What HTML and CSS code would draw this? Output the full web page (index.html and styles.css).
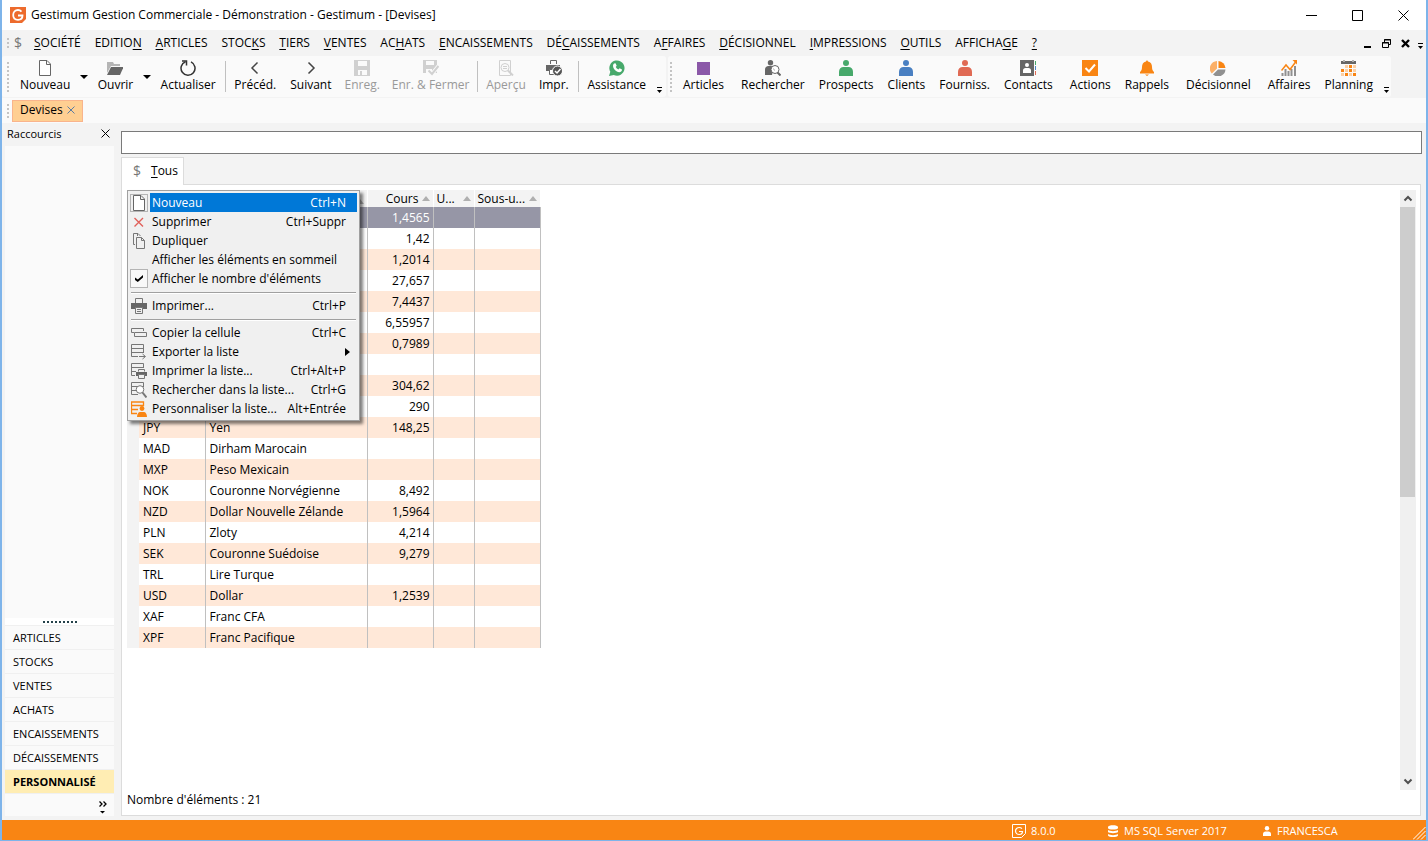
FILE: index.html
```html
<!DOCTYPE html>
<html lang="fr">
<head>
    <meta charset="UTF-8">
    <meta name="viewport" content="width=device-width, initial-scale=1.0">
    <title>Gestimum Gestion Commerciale</title>
    <link rel="stylesheet" href="styles.css">
</head>
<body>
<div class="window">
    <!-- Barre de titre -->
    <header class="titlebar">
        <svg class="logo" viewBox="0 0 16 16"><path d="M0 0h16v12l-4 4H0z" fill="#ed6b2d"/><path d="M11.5 4.6C10.6 3.6 9.500 3 8 3 5.200 3 3.200 5.100 3.200 8s2 4.800 4.800 4.800c2.600 0 4.500-1.700 4.500-4.300H8" fill="none" stroke="#fff" stroke-width="1.8"/></svg>
        <h1 class="title">Gestimum Gestion Commerciale - Démonstration - Gestimum - [Devises]</h1>
        <div class="win-buttons">
            <button type="button" aria-label="Réduire"><svg width="11" height="11"><path d="M0 5.500h11" stroke="#000"/></svg></button>
            <button type="button" aria-label="Agrandir"><svg width="11" height="11"><path d="M.5.5h10v10H.5z" fill="none" stroke="#000"/></svg></button>
            <button type="button" aria-label="Fermer"><svg width="11" height="11"><path d="M.5.5l10 10M10.500.5l-10 10" stroke="#000"/></svg></button>
        </div>
    </header>

    <!-- Menu principal -->
    <nav class="menubar">
        <span class="grip grip-menu"></span>
        <span class="dollar">$</span>
        <div class="menus">
            <button type="button"><u>S</u>OCIÉTÉ</button>
            <button type="button">EDITIO<u>N</u></button>
            <button type="button"><u>A</u>RTICLES</button>
            <button type="button">STOC<u>K</u>S</button>
            <button type="button"><u>T</u>IERS</button>
            <button type="button"><u>V</u>ENTES</button>
            <button type="button">AC<u>H</u>ATS</button>
            <button type="button"><u>E</u>NCAISSEMENTS</button>
            <button type="button">DÉ<u>C</u>AISSEMENTS</button>
            <button type="button">A<u>F</u>FAIRES</button>
            <button type="button"><u>D</u>ÉCISIONNEL</button>
            <button type="button"><u>I</u>MPRESSIONS</button>
            <button type="button"><u>O</u>UTILS</button>
            <button type="button">AFFICHA<u>G</u>E</button>
            <button type="button"><u>?</u></button>
        </div>
        <div class="mdi-buttons">
            <button type="button" aria-label="Réduire la fiche"><svg width="9" height="9"><path d="M1 8h7" stroke="#000" stroke-width="2"/></svg></button>
            <button type="button" aria-label="Restaurer la fiche"><svg width="9" height="9"><path d="M2.500 3V.5h6v5H6M2 1h7M.5 3.500h6v5h-6zM0 4h7" fill="none" stroke="#000"/></svg></button>
            <button type="button" aria-label="Fermer la fiche"><svg width="9" height="9"><path d="M1 1l7 7M8 1L1 8" stroke="#000" stroke-width="2.400"/></svg></button>
        </div>
        <button type="button" class="overflow" aria-label="Plus"><svg width="5" height="6"><path d="M0 .5h5" stroke="#000"/><path d="M0 3h5L2.500 6z"/></svg></button>
    </nav>

    <!-- Barres d'outils -->
    <div class="toolbars">
        <div class="toolbar toolbar-main">
            <span class="grip"></span>
            <button type="button" class="tool"><svg class="ico" viewBox="0 0 16 16"><path d="M2.500.5h7.500l3.500 3.500v11.500h-11zM9.500.5V4.500h4" fill="#fff" stroke="#666"/></svg>Nouveau</button>
            <button type="button" class="drop" aria-label="Options de Nouveau"></button>
            <button type="button" class="tool"><svg class="ico" viewBox="0 0 16 16"><path d="M0 13V2h6l1 2h6v2H4z" fill="#b5b5b5"/><path d="M0 15L4 7h12.500L13 15z" fill="#666"/></svg>Ouvrir</button>
            <button type="button" class="drop" aria-label="Options d'Ouvrir"></button>
            <button type="button" class="tool"><svg class="ico" viewBox="0 0 16 16"><path d="M5.500 1.700A7 7 0 1 0 11 1.900" fill="none" stroke="#333" stroke-width="1.500"/><path d="M2 1h4.500v4.500" fill="none" stroke="#333" stroke-width="1.500"/></svg>Actualiser</button>
            <span class="sep"></span>
            <button type="button" class="tool"><svg class="ico" viewBox="0 0 16 16"><path d="M10.500 2.500L5 8l5.500 5.500" fill="none" stroke="#444" stroke-width="1.500"/></svg>Précéd.</button>
            <button type="button" class="tool"><svg class="ico" viewBox="0 0 16 16"><path d="M5.500 2.500L11 8l-5.500 5.500" fill="none" stroke="#444" stroke-width="1.500"/></svg>Suivant</button>
            <button type="button" class="tool" disabled><svg class="ico" viewBox="0 0 16 16"><path d="M0 0h16v16H0z" fill="#d0d0d0"/><path d="M4 1h9v5H4zM4 10h9v5H4z" fill="#fafafa"/><path d="M6 11h2v4H6z" fill="#d0d0d0"/></svg>Enreg.</button>
            <button type="button" class="tool" disabled><svg class="ico" viewBox="0 0 16 16"><path d="M0 0h14v13H0z" fill="#d0d0d0"/><path d="M3 1h8v4H3zM3 9h6v4H3z" fill="#fafafa"/><path d="M5.500 10.500l3.500 3.500 6.500-8" fill="none" stroke="#fafafa" stroke-width="4"/><path d="M5.500 10.500l3.500 3.500 6.500-8" fill="none" stroke="#d0d0d0" stroke-width="2"/></svg>Enr. &amp; Fermer</button>
            <span class="sep"></span>
            <button type="button" class="tool" disabled><svg class="ico" viewBox="0 0 16 16"><path d="M1.500.5h11v15h-11z" fill="none" stroke="#d0d0d0"/><circle cx="7" cy="7.500" r="4" fill="#fafafa" stroke="#d0d0d0"/><path d="M5 6.500h4M5 8.500h4" stroke="#d0d0d0"/><path d="M10 10.500l5 5" stroke="#d0d0d0" stroke-width="2"/></svg>Aperçu</button>
            <button type="button" class="tool"><svg class="ico" viewBox="0 0 16 16"><path d="M4.500 4V.5h6V4" fill="none" stroke="#666"/><path d="M0 5h14v6H0z" fill="#666"/><path d="M3.500 9.500h5v5h-5z" fill="#fff" stroke="#666"/><circle cx="11.500" cy="11" r="5" fill="#555" stroke="#fafafa"/><path d="M9 11l2 2 3.500-4" fill="none" stroke="#fff" stroke-width="1.500"/></svg>Impr.</button>
            <span class="sep"></span>
            <button type="button" class="tool"><svg class="ico" viewBox="0 0 16 16"><path d="M0 16l1.300-4.200A7.600 7.600 0 1 1 4.800 15z" fill="#47a96b"/><path d="M5 3.500l1.500-.2 1.200 2.500-1 1.200c.6 1.200 1.500 2 2.700 2.600l1.200-1.300 2.400 1.200c0 1.700-1.300 2.700-2.700 2.700C7 12 4 8.500 4 5.700c0-1 .4-1.700 1-2.200z" fill="#fff"/></svg>Assistance</button>
            <button type="button" class="overflow" aria-label="Plus"><svg width="5" height="6"><path d="M0 .5h5" stroke="#000"/><path d="M0 3h5L2.500 6z"/></svg></button>
        </div>
        <div class="toolbar toolbar-links">
            <span class="grip"></span>
            <button type="button" class="tool"><svg class="ico" viewBox="0 0 16 16"><path d="M1 2h13v13H1z" fill="#8b58a8"/></svg>Articles</button>
            <span class="sep"></span>
            <button type="button" class="tool"><svg class="ico" viewBox="0 0 16 16"><circle cx="5.500" cy="2.700" r="2.700" fill="#666"/><path d="M0 15V9.500C0 7.500 1.500 6 3.500 6h5L7 15z" fill="#666"/><circle cx="10" cy="9.500" r="4" fill="#fff" stroke="#666"/><path d="M12.500 12.500l3 3" stroke="#666" stroke-width="2"/><path d="M8.500 8.500l1 2" stroke="#aaa"/></svg>Rechercher</button>
            <button type="button" class="tool"><svg class="ico" viewBox="0 0 16 16"><circle cx="8" cy="3" r="3" fill="#47a96b"/><path d="M1 16v-4.500C1 9 3 7 5.500 7h5C13 7 15 9 15 11.500V16z" fill="#47a96b"/></svg>Prospects</button>
            <button type="button" class="tool"><svg class="ico" viewBox="0 0 16 16"><circle cx="8" cy="3" r="3" fill="#4a80c2"/><path d="M1 16v-4.500C1 9 3 7 5.500 7h5C13 7 15 9 15 11.500V16z" fill="#4a80c2"/></svg>Clients</button>
            <button type="button" class="tool"><svg class="ico" viewBox="0 0 16 16"><circle cx="8" cy="3" r="3" fill="#e06a54"/><path d="M1 16v-4.500C1 9 3 7 5.500 7h5C13 7 15 9 15 11.500V16z" fill="#e06a54"/></svg>Fourniss.</button>
            <button type="button" class="tool"><svg class="ico" viewBox="0 0 16 16"><path d="M0 0h14v16H0z" fill="#666"/><circle cx="7" cy="5" r="2" fill="#fff"/><path d="M3 13v-2.500C3 9 4 8 5.500 8h3c1.500 0 2.500 1 2.500 2.500V13z" fill="#fff"/><path d="M15.500 1v4" stroke="#47a96b"/><path d="M15.500 6v4" stroke="#4a80c2"/><path d="M15.500 11v4" stroke="#e06a54"/></svg>Contacts</button>
            <span class="sep"></span>
            <button type="button" class="tool"><svg class="ico" viewBox="0 0 16 16"><path d="M0 0h16v16H0z" fill="#f98513"/><path d="M3.500 8l3.500 3.500L13 4.500" fill="none" stroke="#fff" stroke-width="2"/></svg>Actions</button>
            <button type="button" class="tool"><svg class="ico" viewBox="0 0 16 16"><path d="M7 1.500C7 0 9 0 9 1.500c3 .5 4 3 4 5.500 0 3 1 4 2 5v1.500H1V12c1-1 2-2 2-5 0-2.500 1-5 4-5.500zM6 14.500h4L8 16z" fill="#f98513"/></svg>Rappels</button>
            <span class="sep"></span>
            <button type="button" class="tool"><svg class="ico" viewBox="0 0 16 16"><path d="M7 1v7.500L1.800 13.500A7.500 7.500 0 0 1 7 1z" fill="#fbb068"/><path d="M8.500 1A7.500 7.500 0 0 1 15.500 8h-7z" fill="#f98513"/><path d="M8 9.500h7.500A7.500 7.500 0 0 1 3 14.500z" fill="#909090"/></svg>Décisionnel</button>
            <span class="sep"></span>
            <button type="button" class="tool"><svg class="ico" viewBox="0 0 16 16"><path d="M1.500 16v-3M4.500 16V9M7.500 16v-5M10.500 16V9M14 16V6" stroke="#909090" stroke-width="2"/><path d="M.5 10.500L5 5l4 4.500L15 1.500" fill="none" stroke="#f98513" stroke-width="1.500"/><path d="M11.500 0H16v4.500z" fill="#f98513"/></svg>Affaires</button>
            <button type="button" class="tool"><svg class="ico" viewBox="0 0 16 16"><path d="M0 1h2v1h2V1h7v1h2V1h2v3H0z" fill="#666"/><path d="M3 0v2M12 0v2" stroke="#666"/><path d="M8 5h3v3H8zM0 9h3v3H0zM8 9h3v3H8zM4 13h3v3H4zM12 13h3v3h-3z" fill="#f98513"/><path d="M4 5h3v3H4zM12 5h3v3h-3zM4 9h3v3H4zM12 9h3v3h-3zM0 13h3v3H0zM8 13h3v3H8z" fill="#fcd0a4"/></svg>Planning</button>
            <button type="button" class="overflow" aria-label="Plus"><svg width="5" height="6"><path d="M0 .5h5" stroke="#000"/><path d="M0 3h5L2.500 6z"/></svg></button>
        </div>
    </div>

    <!-- Onglets des fiches ouvertes -->
    <div class="doc-tabs">
        <span class="grip grip-tabs"></span>
        <button type="button" class="doc-tab">Devises<svg width="8" height="8"><path d="M.5.5l7 7M7.500.5l-7 7" stroke="#5b7da3"/></svg></button>
    </div>

    <main class="main">
        <aside class="sidebar">
            <div class="side-head">
                <span>Raccourcis</span>
                <button type="button" aria-label="Fermer les raccourcis"><svg width="9" height="9"><path d="M.5.5l8 8M8.500.5l-8 8" stroke="#000"/></svg></button>
            </div>
            <div class="side-body"></div>
            <div class="splitter"><span class="dots"></span></div>
            <button type="button" class="side-item">ARTICLES</button>
            <button type="button" class="side-item">STOCKS</button>
            <button type="button" class="side-item">VENTES</button>
            <button type="button" class="side-item">ACHATS</button>
            <button type="button" class="side-item">ENCAISSEMENTS</button>
            <button type="button" class="side-item">DÉCAISSEMENTS</button>
            <button type="button" class="side-item active">PERSONNALISÉ</button>
            <div class="side-foot">
                <button type="button" aria-label="Autres groupes"><svg width="8" height="13"><path d="M.5.5L3 3 .5 5.500M4.500.5L7 3 4.500 5.500" fill="none" stroke="#000" stroke-width="1.300"/><path d="M1 10h5L3.500 12.500z"/></svg></button>
            </div>
        </aside>

        <section class="content">
            <input type="text" class="filter" aria-label="Filtre">
            <div class="view-tabs">
                <button type="button" class="view-tab"><span class="dollar">$</span><span><u>T</u>ous</span></button>
            </div>
            <div class="panel">
                <div class="list">
                    <table class="grid">
                        <colgroup>
                            <col class="c-mark"><col class="c-code"><col class="c-name"><col class="c-rate"><col class="c-unit"><col class="c-sub">
                        </colgroup>
                        <thead>
                            <tr><th></th><th></th><th><i class="sort"></i></th><th class="num">Cours<i class="sort"></i></th><th>U...<i class="sort"></i></th><th>Sous-u...<i class="sort"></i></th></tr>
                        </thead>
                        <tbody>
                            <tr class="selected"><td></td><td></td><td></td><td>1,4565</td><td></td><td></td></tr>
                            <tr><td></td><td></td><td></td><td>1,42</td><td></td><td></td></tr>
                            <tr><td></td><td></td><td></td><td>1,2014</td><td></td><td></td></tr>
                            <tr><td></td><td></td><td></td><td>27,657</td><td></td><td></td></tr>
                            <tr><td></td><td></td><td></td><td>7,4437</td><td></td><td></td></tr>
                            <tr><td></td><td></td><td></td><td>6,55957</td><td></td><td></td></tr>
                            <tr><td></td><td></td><td></td><td>0,7989</td><td></td><td></td></tr>
                            <tr><td></td><td></td><td></td><td></td><td></td><td></td></tr>
                            <tr><td></td><td></td><td></td><td>304,62</td><td></td><td></td></tr>
                            <tr><td></td><td></td><td></td><td>290</td><td></td><td></td></tr>
                            <tr><td></td><td>JPY</td><td>Yen</td><td>148,25</td><td></td><td></td></tr>
                            <tr><td></td><td>MAD</td><td>Dirham Marocain</td><td></td><td></td><td></td></tr>
                            <tr><td></td><td>MXP</td><td>Peso Mexicain</td><td></td><td></td><td></td></tr>
                            <tr><td></td><td>NOK</td><td>Couronne Norvégienne</td><td>8,492</td><td></td><td></td></tr>
                            <tr><td></td><td>NZD</td><td>Dollar Nouvelle Zélande</td><td>1,5964</td><td></td><td></td></tr>
                            <tr><td></td><td>PLN</td><td>Zloty</td><td>4,214</td><td></td><td></td></tr>
                            <tr><td></td><td>SEK</td><td>Couronne Suédoise</td><td>9,279</td><td></td><td></td></tr>
                            <tr><td></td><td>TRL</td><td>Lire Turque</td><td></td><td></td><td></td></tr>
                            <tr><td></td><td>USD</td><td>Dollar</td><td>1,2539</td><td></td><td></td></tr>
                            <tr><td></td><td>XAF</td><td>Franc CFA</td><td></td><td></td><td></td></tr>
                            <tr><td></td><td>XPF</td><td>Franc Pacifique</td><td></td><td></td><td></td></tr>
                        </tbody>
                    </table>

                    <div class="scrollbar">
                        <svg width="16" height="17"><path d="M4.500 10.500L8 7l3.500 3.500" fill="none" stroke="#505050" stroke-width="2"/></svg>
                        <div class="thumb"></div>
                        <svg width="16" height="17"><path d="M4.500 6.500L8 10l3.500-3.500" fill="none" stroke="#505050" stroke-width="2"/></svg>
                    </div>

                    <!-- Menu contextuel de la liste -->
                    <div class="context-menu">
                        <button type="button" class="entry current"><svg class="ico" viewBox="0 0 16 16"><path d="M2.500.5h7.500l3.500 3.500v11.500h-11zM9.500.5V4.500h4" fill="#fff" stroke="#666"/></svg><span class="label">Nouveau<kbd>Ctrl+N</kbd></span></button>
                        <button type="button" class="entry"><svg class="ico" viewBox="0 0 16 16"><path d="M3.500 4l8.500 8.500M12 4l-8.500 8.500" stroke="#e0605a" stroke-width="1.400"/></svg><span class="label">Supprimer<kbd>Ctrl+Suppr</kbd></span></button>
                        <button type="button" class="entry"><svg class="ico" viewBox="0 0 16 16"><path d="M4 11.500H2.500v-11H7L9.500 3M6.500.5V3" fill="none" stroke="#777"/><path d="M5.500 4.500h5l3 3v8h-8zM10.500 4.500v3h3" fill="#f0f0f0" stroke="#777"/></svg><span class="label">Dupliquer</span></button>
                        <button type="button" class="entry"><span class="ico"></span><span class="label">Afficher les éléments en sommeil</span></button>
                        <label class="entry"><input type="checkbox" class="tick" checked><span class="label">Afficher le nombre d'éléments</span></label>
                        <hr>
                        <button type="button" class="entry"><svg class="ico" viewBox="0 0 16 16"><path d="M4.500 5V.5h7V5" fill="none" stroke="#777"/><path d="M0 5h16v6H0z" fill="#666"/><path d="M4.500 9.500h7v6h-7z" fill="#f0f0f0" stroke="#777"/><path d="M6 11.500h4M6 13.500h4" stroke="#777"/></svg><span class="label">Imprimer...<kbd>Ctrl+P</kbd></span></button>
                        <hr>
                        <button type="button" class="entry"><svg class="ico" viewBox="0 0 16 16"><path d="M3 7.500H.5v-4h12V6M3.500 7.500h12v4h-12z" fill="none" stroke="#777"/></svg><span class="label">Copier la cellule<kbd>Ctrl+C</kbd></span></button>
                        <button type="button" class="entry"><svg class="ico" viewBox="0 0 16 16"><path d="M12.500 9V.5H.5v12H7M.5 4.500h12M.5 8.500h12" fill="none" stroke="#777"/><path d="M8 12.500h6M11.500 10l3 2.500-3 2.500" fill="none" stroke="#777"/></svg><span class="label">Exporter la liste<i class="submenu"></i></span></button>
                        <button type="button" class="entry"><svg class="ico" viewBox="0 0 16 16"><path d="M12.500 5V.5H.5v12H4M.5 4.500h12M.5 8.500H5" fill="none" stroke="#777"/><path d="M7.500 8.500v-2h6v2" fill="none" stroke="#777"/><path d="M5 9h11v4H5z" fill="#666"/><path d="M7.500 11.500h6v4h-6z" fill="#f0f0f0" stroke="#777"/></svg><span class="label">Imprimer la liste...<kbd>Ctrl+Alt+P</kbd></span></button>
                        <button type="button" class="entry"><svg class="ico" viewBox="0 0 16 16"><path d="M12.500 5V.5H.5v12H7M.5 4.500h12M.5 8.500H5" fill="none" stroke="#777"/><circle cx="9" cy="7.500" r="3.800" fill="#fff" stroke="#777"/><path d="M11.500 10.500l4 5" stroke="#777" stroke-width="2"/></svg><span class="label">Rechercher dans la liste...<kbd>Ctrl+G</kbd></span></button>
                        <button type="button" class="entry"><svg class="ico" viewBox="0 0 16 16"><path d="M12.500 5V1H.5v11.500H6M.5 4.500h12M.5 8.500H7" fill="none" stroke="#f98513" stroke-width="1.300"/><circle cx="11" cy="7.500" r="2.400" fill="#f98513"/><path d="M6 16c0-3 1.500-5 3-5h4c1.500 0 3 2 3 5z" fill="#f98513"/></svg><span class="label">Personnaliser la liste...<kbd>Alt+Entrée</kbd></span></button>
                    </div>
                </div>
                <p class="count">Nombre d'éléments : 21</p>
            </div>
        </section>
    </main>

    <footer class="statusbar">
        <span class="status s-version"><svg width="14" height="14"><path d="M.5.5h13v9l-4 4h-9z" fill="none" stroke="#fff"/><path d="M10 4.700C9.300 4 8.300 3.500 7.200 3.500c-2 0-3.700 1.500-3.700 3.500s1.700 3.500 3.700 3.500S10.500 9.300 10.500 7.500H7" fill="none" stroke="#fff" stroke-width="1.200"/></svg>8.0.0</span>
        <span class="status s-server"><svg width="12" height="12"><path d="M1 2c0-2.500 10-2.500 10 0v1c0 2-10 2-10 0zM1 5c2 1.500 8 1.500 10 0v2c-1 1.500-9 1.500-10 0zM1 9c2 1.500 8 1.500 10 0v1.500c-1 2-9 2-10 0z" fill="#fff"/></svg>MS SQL Server 2017</span>
        <span class="status s-user"><svg width="10" height="10"><circle cx="5" cy="2.200" r="2.200" fill="#fff"/><path d="M1 10V8c0-1.500 1-2.500 2.500-2.500h3C8 5.500 9 6.500 9 8v2z" fill="#fff"/></svg>FRANCESCA</span>
        <svg class="resize" width="13" height="13"><path d="M0 12.500L12.500 0M4 12.500L12.500 4M8 12.500L12.500 8" stroke="#fff"/></svg>
    </footer>
</div>
</body>
</html>
```

FILE: styles.css
```css
* {
    box-sizing: border-box;
}

body {
    margin: 0;
    font-family: "Open Sans", "Noto Sans", sans-serif;
    font-size: 12px;
    line-height: 16px;
    color: #000;
}

button {
    margin: 0;
    padding: 0;
    border: none;
    background: none;
    font: inherit;
    color: inherit;
    white-space: nowrap;
}

svg {
    display: block;
    flex: none;
}

u {
    text-underline-offset: 2px;
}

.window {
    display: flex;
    flex-direction: column;
    min-height: 100vh;
    border: solid #7eb4ea;
    border-width: 0 2px 1px 2px;
    background-color: #f3f3f3;
}

.ico {
    width: 16px;
    height: 16px;
    flex: none;
}

.grip {
    width: 2px;
    height: 30px;
    flex: none;
    background: repeating-linear-gradient(#c4c4c4 0 2px, transparent 2px 4px);
}

.grip-menu {
    height: 10px;
}

.grip-tabs {
    height: 14px;
}

.dollar {
    font-size: 14px;
    color: #777;
}

/* Barre de titre */
.titlebar {
    display: flex;
    align-items: center;
    height: 30px;
    padding-left: 8px;
    background-color: #fff;
}

.logo {
    width: 16px;
    height: 16px;
}

.title {
    flex: 1;
    margin: 0 0 0 5px;
    font-size: 12px;
    font-weight: normal;
}

.win-buttons {
    display: flex;
}

.win-buttons button {
    display: flex;
    justify-content: center;
    width: 46px;
}

/* Menu principal */
.menubar {
    display: flex;
    align-items: center;
    height: 26px;
    padding-left: 5px;
}

.menubar .dollar {
    width: 20px;
    margin-left: 5px;
}

.menus {
    display: flex;
    justify-content: space-between;
    flex: 1;
    max-width: 1003px;
}

.mdi-buttons {
    display: flex;
    gap: 10px;
    margin-left: auto;
    margin-right: 5px;
}

.overflow {
    align-self: flex-end;
    padding: 0 4px 7px;
}

.menubar .overflow {
    padding: 0 3px 7px;
}

/* Barres d'outils */
.toolbars {
    display: flex;
    gap: 2px;
    height: 41px;
}

.toolbar {
    display: flex;
    align-items: center;
    border-radius: 3px;
    background-color: #fafafa;
}

.toolbar-main {
    width: 664px;
    padding-left: 5px;
}

.toolbar-links {
    width: 723px;
    padding-left: 2px;
}

.tool {
    display: flex;
    flex-direction: column;
    align-items: center;
    gap: 1px;
    padding: 0 7px;
}

.grip + .tool {
    margin-left: 4px;
}

.tool:disabled {
    padding: 0 6px;
    color: #999;
}

.drop {
    width: 19px;
    height: 16px;
}

.drop::before {
    content: "";
    display: block;
    margin: 0 auto;
    width: 0;
    border: 4px solid transparent;
    border-top-color: #000;
    border-bottom: none;
}

.sep {
    width: 1px;
    height: 31px;
    margin: 0 2px;
    background-color: #c0c0c0;
}

.toolbar-links .sep {
    margin: 0 1px 0 2px;
}

.toolbar .overflow {
    margin-left: auto;
    padding: 0 4px 4px;
}

/* Onglets des fiches */
.doc-tabs {
    display: flex;
    align-items: center;
    gap: 3px;
    height: 25px;
    margin-top: 1px;
    padding-left: 5px;
    background-color: #fafafa;
}

.doc-tab {
    display: flex;
    align-items: center;
    gap: 4px;
    height: 22px;
    padding: 0 7px 2px;
    border: 1px solid #f9b48c;
    background-color: #ffcf92;
}

.main {
    display: flex;
    flex: 1;
    gap: 7px;
    padding: 0 4px 4px 3px;
}

/* Raccourcis */
.sidebar {
    display: flex;
    flex-direction: column;
    width: 109px;
    font-size: 11px;
}

.side-head {
    display: flex;
    justify-content: space-between;
    align-items: center;
    height: 23px;
    padding: 0 4px 2px 2px;
}

.side-body {
    flex: 1;
    background-color: #fafafa;
}

.splitter {
    display: flex;
    justify-content: center;
    align-items: center;
    height: 7px;
    background-color: #fff;
}

.dots {
    width: 34px;
    height: 2px;
    background: repeating-linear-gradient(90deg, #24424a 0 2px, transparent 2px 4px);
}

.side-item {
    height: 24px;
    padding-left: 8px;
    border-top: 1px solid #f0f0f0;
    background-color: #fafafa;
    text-align: left;
}

.side-item.active {
    background-color: #ffedb3;
    font-weight: bold;
}

.side-foot {
    display: flex;
    justify-content: flex-end;
    height: 23px;
    padding: 4px 7px 0 0;
    border-top: 1px solid #f0f0f0;
    background-color: #fafafa;
}

/* Liste */
.content {
    display: flex;
    flex-direction: column;
    flex: 1;
    min-width: 0;
    padding-top: 8px;
}

.filter {
    width: 100%;
    height: 23px;
    border: 1px solid #7a7a7a;
    border-radius: 0;
    background-color: #fff;
    font: inherit;
}

.view-tabs {
    display: flex;
    height: 31px;
    padding-top: 3px;
}

.view-tab {
    display: flex;
    align-items: center;
    gap: 10px;
    z-index: 1;
    height: 28px;
    margin-bottom: -1px;
    padding: 0 5px 2px 11px;
    border: 1px solid #dcdcdc;
    border-bottom: none;
    background-color: #fff;
}

.panel {
    display: flex;
    flex-direction: column;
    flex: 1;
    margin: -1px 1px 0 0;
    padding: 5px 4px 7px 5px;
    border: 1px solid #dcdcdc;
    background-color: #fff;
}

.list {
    display: flex;
    justify-content: space-between;
    align-items: flex-start;
    flex: 1;
    position: relative;
}

.grid {
    width: 413px;
    table-layout: fixed;
    border-collapse: collapse;
}

.c-mark { width: 12px; }
.c-code { width: 66px; }
.c-name { width: 162px; }
.c-rate { width: 66px; }
.c-unit { width: 41px; }
.c-sub { width: 66px; }

.grid th {
    height: 17px;
    padding: 1px 3px 0;
    background-color: #f3f3f3;
    border-right: 1px solid #fff;
    font-weight: normal;
    line-height: 16px;
    text-align: left;
    white-space: nowrap;
}

.grid th.num {
    text-align: right;
}

.sort {
    float: right;
    margin: 5px 0 0 3px;
    border: 4px solid transparent;
    border-top: none;
    border-bottom: 5px solid #b0b0b0;
}

.grid td {
    height: 21px;
    padding: 0 4px;
    border-right: 1px solid #c0c0c0;
}

.grid td:first-child {
    border-right: none;
    background-color: #f3f3f3;
}

.grid td:nth-child(4) {
    padding-right: 3px;
    text-align: right;
}

.grid tbody tr:nth-child(odd) {
    background-color: #ffe8d8;
}

.grid tbody tr.selected {
    background-color: #9696a6;
    color: #fff;
}

.scrollbar {
    display: flex;
    flex-direction: column;
    align-self: stretch;
    width: 16px;
    background-color: #f0f0f0;
}

.thumb {
    width: 15px;
    height: 290px;
    margin-bottom: auto;
    background-color: #cdcdcd;
}

.count {
    margin: 0;
    padding-top: 2px;
}

/* Menu contextuel */
.context-menu {
    position: absolute;
    top: 0;
    left: 0;
    width: 233px;
    padding: 2px;
    border: 1px solid #a0a0a0;
    background-color: #f0f0f0;
    box-shadow: 3px 3px 3px rgba(0, 0, 0, 0.5);
}

.entry {
    display: flex;
    align-items: center;
    gap: 3px;
    width: 100%;
    height: 19px;
    padding-left: 1px;
    text-align: left;
}

.label {
    display: flex;
    justify-content: space-between;
    align-items: center;
    flex: 1;
    height: 19px;
    padding: 0 11px 0 2px;
}

.entry kbd {
    font: inherit;
}

.entry.current .label {
    background-color: #0078d7;
    color: #fff;
}

.entry.current .ico {
    outline: 1px solid #b4b4b4;
}

.tick {
    appearance: none;
    display: flex;
    justify-content: center;
    align-items: center;
    width: 16px;
    height: 17px;
    margin: 0;
    outline: 1px solid #b4b4b4;
    background-color: #f8f8f8;
}

.tick:checked::before {
    content: "";
    width: 8px;
    height: 7px;
    background-color: #000;
    clip-path: polygon(0 35%, 35% 65%, 100% 0, 100% 35%, 35% 100%, 0 70%);
}

.submenu {
    margin-right: -4px;
    border: 4px solid transparent;
    border-left: 5px solid #000;
    border-right: none;
}

.context-menu hr {
    height: 2px;
    margin: 4px 1px 2px;
    border: none;
    border-top: 1px solid #a0a0a0;
    background-color: #fff;
}

/* Barre d'état */
.statusbar {
    display: flex;
    align-items: center;
    height: 20px;
    padding: 2px 0 0 24px;
    background-color: #f98513;
    color: #fff;
    font-size: 11px;
}

.status {
    display: flex;
    align-items: center;
    gap: 5px;
    flex: none;
}

.s-version {
    width: 95px;
    margin-left: auto;
}

.s-server {
    width: 155px;
}

.s-user {
    width: 151px;
}

.resize {
    align-self: flex-end;
}
```
